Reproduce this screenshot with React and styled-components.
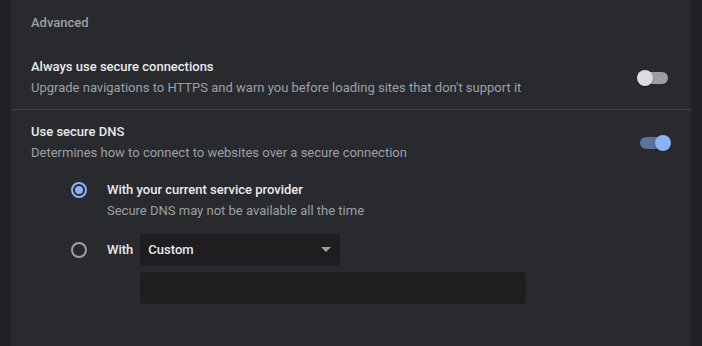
import React from "react";
import styled, { createGlobalStyle } from "styled-components";

const Global = createGlobalStyle`
  html, body { margin: 0; padding: 0; background: #202124; }
  body { font-family: Roboto, "Liberation Sans", Arial, sans-serif; font-size: 13px; -webkit-font-smoothing: antialiased; }
  * { box-sizing: border-box; }
`;

const Page = styled.div`
  display: flex;
  justify-content: flex-start;
  padding: 0 11px;
  height: 346px;
  overflow: hidden;
`;

const Card = styled.div`
  width: 680px;
  height: 100%;
  background: #292a2d;
  display: flex;
  flex-direction: column;
`;

const SectionHeader = styled.div`
  padding: 13px 20px 0;
  line-height: 20px;
  font-weight: 500;
  color: #9aa0a6;
`;

const Row = styled.div`
  display: flex;
  align-items: center;
  justify-content: space-between;
  padding: ${p => p.$pad};
  padding-left: 20px;
  padding-right: 23px;
  border-top: ${p => (p.$divider ? "1px solid #3f4042" : "none")};
`;

const TextBlock = styled.div`
  display: flex;
  flex-direction: column;
  gap: 1px;
`;

const Title = styled.div`
  line-height: 20px;
  color: #e8eaed;
  font-weight: 500;
`;

const Secondary = styled.div`
  line-height: 20px;
  color: #9aa0a6;
`;

const Toggle = styled.div`
  position: relative;
  width: 28px;
  height: 12px;
  border-radius: 6px;
  background: ${p => (p.$on ? "#5b7299" : "#9b9ea3")};
`;

const Knob = styled.div`
  position: absolute;
  top: -2px;
  left: ${p => (p.$on ? "15px" : "-3px")};
  width: 16px;
  height: 16px;
  border-radius: 50%;
  background: ${p => (p.$on ? "#8ab4f8" : "#dadce0")};
  box-shadow: 0 1px 2px rgba(0, 0, 0, 0.3);
`;

const RadioGroup = styled.div`
  display: flex;
  flex-direction: column;
  padding: 17px 0 0 60px;
`;

const Option = styled.div`
  display: grid;
  grid-template-columns: 16px auto;
  column-gap: 20px;
  align-items: ${p => (p.$top ? "start" : "center")};
`;

const Radio = styled.div`
  width: 16px;
  height: 16px;
  border-radius: 50%;
  border: 2px solid ${p => (p.$checked ? "#8ab4f8" : "#9aa0a6")};
  display: flex;
  align-items: center;
  justify-content: center;
  margin-top: ${p => p.$mt || 0}px;
  &::after {
    content: "";
    display: ${p => (p.$checked ? "block" : "none")};
    width: 8px;
    height: 8px;
    border-radius: 50%;
    background: #8ab4f8;
  }
`;

const OptionLabel = styled.div`
  line-height: 20px;
  color: #e8eaed;
  font-weight: 500;
`;

const CustomLine = styled.div`
  display: flex;
  align-items: center;
  gap: 7px;
`;

const Select = styled.div`
  width: 200px;
  height: 32px;
  border-radius: 4px;
  background: #1e1e21;
  display: flex;
  align-items: center;
  justify-content: space-between;
  padding: 0 9px 1px 8px;
  color: #e8eaed;
  font-weight: 500;
`;

const Input = styled.div`
  width: 386px;
  height: 32px;
  border-radius: 4px;
  background: #1e1e21;
  margin: 6px 0 0 69px;
`;

const Spacer = styled.div`
  height: ${p => p.$h}px;
`;

export default function App() {
  return (
    <>
      <Global />
      <Page>
        <Card>
          <SectionHeader>Advanced</SectionHeader>
          <Row $pad="24px 0 11px">
            <TextBlock>
              <Title>Always use secure connections</Title>
              <Secondary>Upgrade navigations to HTTPS and warn you before loading sites that don't support it</Secondary>
            </TextBlock>
            <Toggle>
              <Knob />
            </Toggle>
          </Row>
          <Row $divider $pad="12px 0 0">
            <TextBlock>
              <Title>Use secure DNS</Title>
              <Secondary>Determines how to connect to websites over a secure connection</Secondary>
            </TextBlock>
            <Toggle $on>
              <Knob $on />
            </Toggle>
          </Row>
          <RadioGroup>
            <Option $top>
              <Radio $checked $mt={2} />
              <TextBlock>
                <OptionLabel>With your current service provider</OptionLabel>
                <Secondary>Secure DNS may not be available all the time</Secondary>
              </TextBlock>
            </Option>
            <Spacer $h={13} />
            <Option>
              <Radio />
              <CustomLine>
                <OptionLabel>With</OptionLabel>
                <Select>
                  <span>Custom</span>
                  <svg width="10" height="5" viewBox="0 0 10 5">
                    <path d="M0 0 L10 0 L5 5 Z" fill="#9aa0a6" />
                  </svg>
                </Select>
              </CustomLine>
            </Option>
            <Input />
          </RadioGroup>
        </Card>
      </Page>
    </>
  );
}
